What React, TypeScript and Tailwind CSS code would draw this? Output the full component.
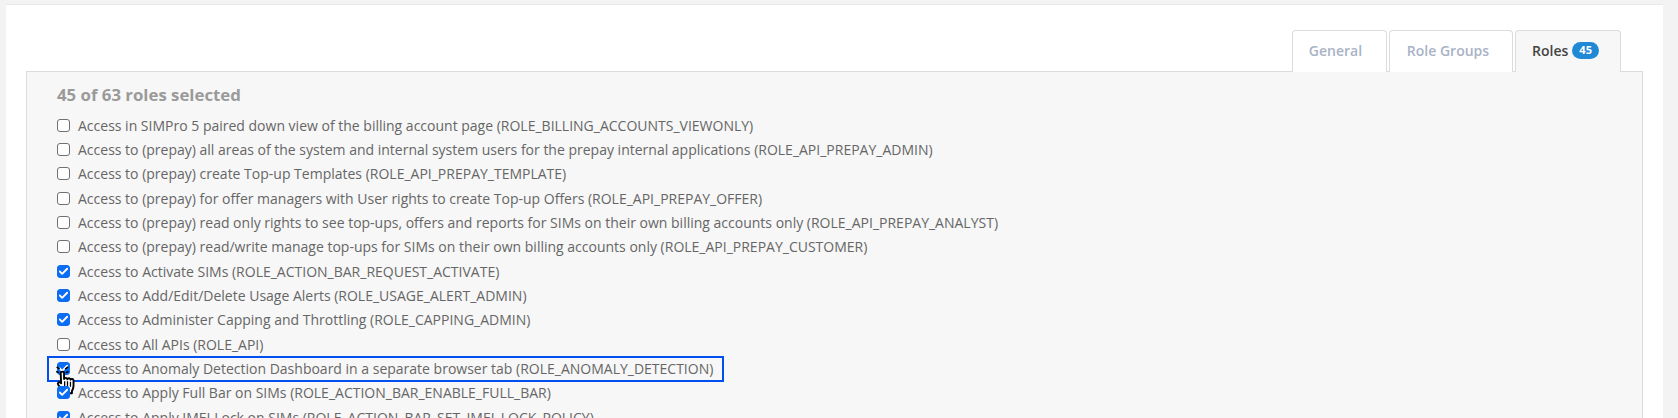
import { Check } from 'lucide-react'

const ROLES: [string, boolean][] = [
  ['Access in SIMPro 5 paired down view of the billing account page (ROLE_BILLING_ACCOUNTS_VIEWONLY)', false],
  ['Access to (prepay) all areas of the system and internal system users for the prepay internal applications (ROLE_API_PREPAY_ADMIN)', false],
  ['Access to (prepay) create Top-up Templates (ROLE_API_PREPAY_TEMPLATE)', false],
  ['Access to (prepay) for offer managers with User rights to create Top-up Offers (ROLE_API_PREPAY_OFFER)', false],
  ['Access to (prepay) read only rights to see top-ups, offers and reports for SIMs on their own billing accounts only (ROLE_API_PREPAY_ANALYST)', false],
  ['Access to (prepay) read/write manage top-ups for SIMs on their own billing accounts only (ROLE_API_PREPAY_CUSTOMER)', false],
  ['Access to Activate SIMs (ROLE_ACTION_BAR_REQUEST_ACTIVATE)', true],
  ['Access to Add/Edit/Delete Usage Alerts (ROLE_USAGE_ALERT_ADMIN)', true],
  ['Access to Administer Capping and Throttling (ROLE_CAPPING_ADMIN)', true],
  ['Access to All APIs (ROLE_API)', false],
  ['Access to Anomaly Detection Dashboard in a separate browser tab (ROLE_ANOMALY_DETECTION)', true],
  ['Access to Apply Full Bar on SIMs (ROLE_ACTION_BAR_ENABLE_FULL_BAR)', true],
  ['Access to Apply IMEI Lock on SIMs (ROLE_ACTION_BAR_SET_IMEI_LOCK_POLICY)', true],
]

function Box({ checked }: { checked: boolean }) {
  return (
    <span className={`w-[13px] h-[13px] rounded-[3px] flex-shrink-0 flex items-center justify-center border ${checked ? 'bg-[#0b6cf4] border-[#0b6cf4]' : 'bg-white border-[#707070]'}`}>
      {checked && <Check size={11} strokeWidth={4} className="text-white" />}
    </span>
  )
}

// pointer with click marks round the fingertip
function HandCursor() {
  return (
    <svg width="25" height="32" viewBox="0 0 22 28" className="absolute -left-[2px] top-[8px]">
      <path d="M1 6.5l2.5 1M1.5 2.5l2.5 2M11.5 2.5l-2.5 2M12 6.5l-2.5 1" stroke="#000" strokeWidth="1.4" />
      <path d="M5 8c0-1.8 3-1.8 3 0v5.2c.4-1.5 2.7-1.4 2.9.2.4-1.3 2.6-1.2 2.8.3.5-1 2.6-.8 2.6.8v4.5c0 2.2-.7 3.4-1.4 4.6v2H7.2v-1.8c-1.2-1.5-3-3.6-4.4-5.6-1-1.6.9-3 2.2-1.8l.4.5L5 8z" fill="#fff" stroke="#000" strokeWidth="1.7" strokeLinejoin="round" />
      <path d="M8.5 15v5M11 15v5M13.6 15.5v4.5" stroke="#000" strokeWidth="1.1" />
    </svg>
  )
}

export default function App() {
  return (
    <div className="h-[418px] overflow-hidden bg-[#f3f3f3] pt-1 pl-[6px] pr-[15px] font-['Open_Sans',sans-serif]">
      <div className="h-[500px] bg-white border-t border-[#e8e8e8] pt-[25px] px-5">
        <div className="flex justify-end gap-[2px] pr-[22px] relative z-10">
          <div className="h-[42px] w-[95px] bg-white border border-b-0 border-[#dcdcdc] rounded-t-[4px] flex items-center justify-center text-[14px] font-semibold text-[#a9b3c6] pb-[3px] pr-2">General</div>
          <div className="h-[42px] w-[124px] bg-white border border-b-0 border-[#dcdcdc] rounded-t-[4px] flex items-center justify-center text-[14px] font-semibold text-[#a9b3c6] pb-[3px] pr-[6px]">Role Groups</div>
          <div className="h-[42px] w-[106px] bg-[#f7f7f7] border border-b-0 border-[#dcdcdc] rounded-t-[4px] flex items-center justify-center gap-1 text-[14px] font-semibold text-[#444] pb-[3px] pr-[5px]">
            Roles
            <span className="h-[17px] px-[7px] rounded-full bg-[#2089d6] text-white text-[11px] font-bold flex items-center">45</span>
          </div>
        </div>
        <div className="-mt-px bg-[#f7f7f7] border border-[#dcdcdc] pl-[30px] pt-[11px] h-[400px]">
          <div className="text-[16.8px] leading-[24px] font-bold text-[#9a9a9a] mb-[6px]">45 of 63 roles selected</div>
          {ROLES.map(([label, checked], i) => (
            <div key={label} className="relative h-[24.33px] flex items-center gap-[8px] text-[14px] text-[#666] whitespace-nowrap">
              <Box checked={checked} />
              <span>{label}</span>
              {i === 10 && (
                <>
                  <div className="absolute -left-[10px] top-0 w-[677px] h-[26px] border-2 border-[#0050ef]" />
                  <HandCursor />
                </>
              )}
            </div>
          ))}
        </div>
      </div>
    </div>
  )
}
